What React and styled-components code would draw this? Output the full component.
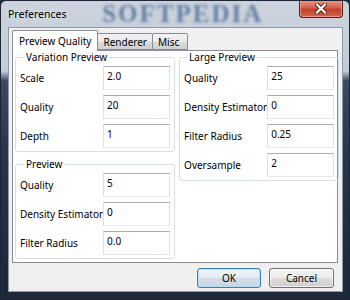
import React from 'react';
import styled, { createGlobalStyle } from 'styled-components';

const GlobalStyle = createGlobalStyle`
  html, body {
    margin: 0;
    padding: 0;
    background: #1f2b3e;
  }
  body {
    font-family: "Noto Sans", "Liberation Sans", sans-serif;
  }
  * {
    box-sizing: border-box;
  }
`;

const Window = styled.div`
  width: 350px;
  height: 300px;
  display: flex;
  flex-direction: column;
  padding: 0 6px 7px 7px;
  border: 1px solid #1b2535;
  border-radius: 6px 6px 0 0;
  background: linear-gradient(
    to bottom,
    #ccd3dc 0,
    #c3ccd7 70px,
    #3a4961 80px,
    #26344a 160px,
    #1d2839 100%
  );
  overflow: hidden;
`;

const TitleBar = styled.div`
  height: 26px;
  display: flex;
  align-items: center;
  justify-content: space-between;
`;

const Title = styled.span`
  font-size: 10.5px;
  color: #000;
  text-shadow: 0 0 6px rgba(255, 255, 255, 0.9);
`;

const Watermark = styled.span`
  font-family: "Liberation Serif", serif;
  font-size: 25px;
  font-weight: bold;
  line-height: 26px;
  letter-spacing: 2px;
  color: rgba(55, 90, 140, 0.7);
  filter: blur(1.4px);
`;

const CloseButton = styled.div`
  align-self: flex-start;
  margin-top: -1px;
  width: 44px;
  height: 18px;
  display: flex;
  align-items: center;
  justify-content: center;
  border: 1px solid #5a1d14;
  border-top: none;
  border-radius: 0 0 4px 4px;
  background: linear-gradient(to bottom, #e7a08f 0%, #d2614c 45%, #c2402c 55%, #d0664c 100%);
  box-shadow: inset 0 0 0 1px rgba(255, 200, 190, 0.5);
`;

const Client = styled.div`
  flex: 1;
  display: flex;
  flex-direction: column;
  background: #f0f0f0;
  border: 1px solid #8d99a8;
  padding: 2px 4px 3px 3px;
`;

const TabRow = styled.div`
  display: flex;
  align-items: flex-end;
  margin-bottom: -1px;
  position: relative;
  z-index: 1;
`;

const Tab = styled.div`
  height: ${p => (p.$active ? '21px' : '17px')};
  margin-bottom: ${p => (p.$active ? '0' : '1px')};
  margin-left: ${p => (p.$first ? '0' : '-1px')};
  min-width: 36px;
  padding: ${p => (p.$active ? '0 6px 1px' : '0 5px')};
  display: flex;
  align-items: center;
  font-size: 10px;
  color: #000;
  border: 1px solid #898c95;
  border-bottom: ${p => (p.$active ? 'none' : '1px solid #898c95')};
  border-radius: 2px 2px 0 0;
  background: ${p =>
    p.$active ? '#ffffff' : 'linear-gradient(to bottom, #f3f3f3 0%, #ebebeb 50%, #dddddd 50%, #cfcfcf 100%)'};
`;

const Panel = styled.div`
  flex: 1;
  display: grid;
  grid-template-columns: 1fr 1fr;
  column-gap: 4px;
  align-items: start;
  background: #ffffff;
  border: 1px solid #898c95;
  padding: 0 2px 3px 2px;
`;

const Column = styled.div`
  display: flex;
  flex-direction: column;
  gap: 6px;
`;

const Group = styled.fieldset`
  margin: 0;
  min-width: 0;
  padding: 0 4px 3px 4px;
  border: 1px solid #d5dfe5;
  border-radius: 3px;
`;

const Legend = styled.legend`
  margin-left: ${p => (p.$right ? '3px' : '4px')};
  padding: 0 2px;
  font-size: 10px;
  line-height: 12px;
  color: #000;
`;

const Fields = styled.div`
  margin-top: 3px;
  display: grid;
  grid-template-columns: 1fr 67px;
  row-gap: 5px;
  align-items: center;
`;

const Label = styled.span`
  font-size: 10px;
  color: #000;
  white-space: nowrap;
`;

const TextBox = styled.input`
  width: 67px;
  height: 24px;
  margin: 0;
  padding: 0 3px 5px 3px;
  font-family: inherit;
  font-size: 10px;
  color: #000;
  background: #fff;
  border: 1px solid #e2e3ea;
  border-top-color: #abadb3;
  border-left-color: #dbdfe6;
  border-bottom-color: #e3e9ef;
  outline: none;
`;

const ButtonRow = styled.div`
  margin-top: 5px;
  padding-right: 4px;
  display: flex;
  justify-content: flex-end;
  gap: 8px;
`;

const Button = styled.button`
  width: ${p => (p.$wide ? '65px' : '64px')};
  height: 20px;
  margin: 0;
  padding: 0;
  font-family: inherit;
  font-size: 10px;
  color: #000;
  border-radius: 3px;
  border: 1px solid ${p => (p.$default ? '#3c7fb1' : '#707070')};
  background: ${p =>
    p.$default
      ? 'linear-gradient(to bottom, #eef4f9 0%, #e3ecf4 50%, #d2dde8 50%, #c8d5e2 100%)'
      : 'linear-gradient(to bottom, #f2f2f2 0%, #ebebeb 50%, #dddddd 50%, #cfcfcf 100%)'};
  box-shadow: inset 0 0 0 1px ${p => (p.$default ? 'rgba(180, 225, 250, 0.9)' : 'rgba(255, 255, 255, 0.7)')};
`;

const Field = ({ label, value }) => (
  <>
    <Label>{label}</Label>
    <TextBox readOnly value={value} />
  </>
);

export default function App() {
  return (
    <>
      <GlobalStyle />
      <Window>
        <TitleBar>
          <Title>Preferences</Title>
          <Watermark aria-hidden="true">SOFTPEDIA</Watermark>
          <CloseButton>
            <svg width="12" height="11" viewBox="0 0 12 11">
              <path d="M2 1.5 L10 9.5 M10 1.5 L2 9.5" stroke="#4a1a12" strokeWidth="4" strokeLinecap="square" />
              <path d="M2 1.5 L10 9.5 M10 1.5 L2 9.5" stroke="#ffffff" strokeWidth="2.2" strokeLinecap="square" />
            </svg>
          </CloseButton>
        </TitleBar>
        <Client>
          <TabRow>
            <Tab $active $first>Preview Quality</Tab>
            <Tab>Renderer</Tab>
            <Tab>Misc</Tab>
          </TabRow>
          <Panel>
            <Column>
              <Group>
                <Legend>Variation Preview</Legend>
                <Fields>
                  <Field label="Scale" value="2.0" />
                  <Field label="Quality" value="20" />
                  <Field label="Depth" value="1" />
                </Fields>
              </Group>
              <Group>
                <Legend>Preview</Legend>
                <Fields>
                  <Field label="Quality" value="5" />
                  <Field label="Density Estimator" value="0" />
                  <Field label="Filter Radius" value="0.0" />
                </Fields>
              </Group>
            </Column>
            <Column>
              <Group>
                <Legend $right>Large Preview</Legend>
                <Fields>
                  <Field label="Quality" value="25" />
                  <Field label="Density Estimator" value="0" />
                  <Field label="Filter Radius" value="0.25" />
                  <Field label="Oversample" value="2" />
                </Fields>
              </Group>
            </Column>
          </Panel>
          <ButtonRow>
            <Button $default>OK</Button>
            <Button $wide>Cancel</Button>
          </ButtonRow>
        </Client>
      </Window>
    </>
  );
}
